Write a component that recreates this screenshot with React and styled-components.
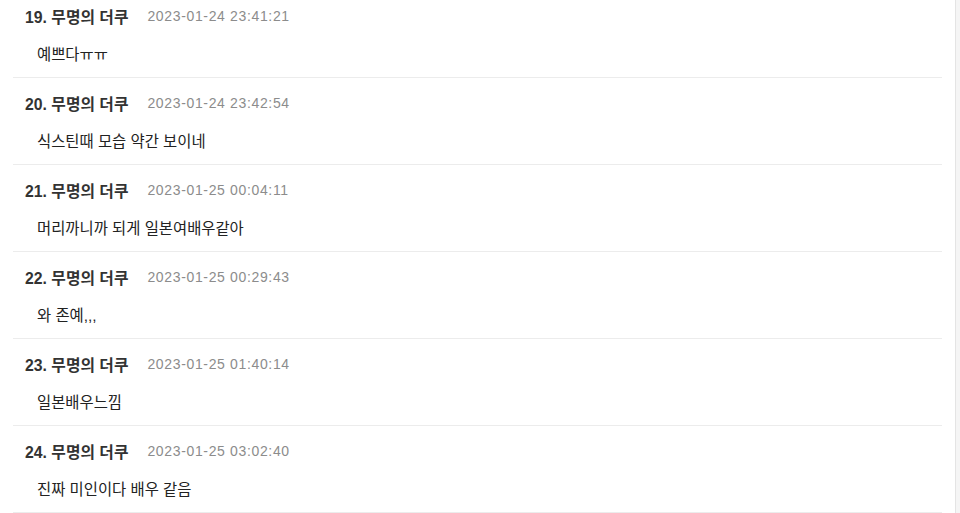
import styled, { createGlobalStyle } from "styled-components"

const GlobalStyle = createGlobalStyle`
  html, body {
    margin: 0;
    padding: 0;
    background: #ffffff;
    overflow: hidden;
  }
  body {
    font-family: "Liberation Sans", "Noto Sans CJK KR", sans-serif;
  }
`

const Page = styled.div`
  display: flex;
  width: 960px;
  height: 513px;
  overflow: hidden;
`

const Content = styled.div`
  flex: 1;
  min-width: 0;
`

const Track = styled.div`
  width: 4px;
  border-left: 1px solid #e4e4e4;
  background: #f5f5f5;
`

const List = styled.ul`
  list-style: none;
  margin: -9px 0 0 13px;
  padding: 0;
  width: 929px;
`

const Row = styled.li`
  padding: 16px 0 12px;
  border-bottom: 1px solid #ececec;
`

const Head = styled.div`
  display: flex;
  align-items: center;
  height: 18px;
  padding-left: 12px;
`

const Writer = styled.span`
  font-size: 15.8px;
  font-weight: 700;
  color: #333333;
  margin-right: 19px;
`

const Date = styled.span`
  font-size: 14px;
  letter-spacing: 0.65px;
  color: #8c8c8c;
`

const Body = styled.p`
  margin: 20px 0 0;
  padding-left: 24px;
  font-size: 15.4px;
  line-height: 20px;
  color: #222222;
`

const comments = [
  { no: 19, date: "2023-01-24 23:41:21", text: "예쁘다ㅠㅠ" },
  { no: 20, date: "2023-01-24 23:42:54", text: "식스틴때 모습 약간 보이네" },
  { no: 21, date: "2023-01-25 00:04:11", text: "머리까니까 되게 일본여배우같아" },
  { no: 22, date: "2023-01-25 00:29:43", text: "와 존예,,," },
  { no: 23, date: "2023-01-25 01:40:14", text: "일본배우느낌" },
  { no: 24, date: "2023-01-25 03:02:40", text: "진짜 미인이다 배우 같음" },
]

export default function App() {
  return (
    <>
      <GlobalStyle />
      <Page>
        <Content>
          <List>
            {comments.map((c) => (
              <Row key={c.no}>
                <Head>
                  <Writer>{c.no}. 무명의 더쿠</Writer>
                  <Date>{c.date}</Date>
                </Head>
                <Body>{c.text}</Body>
              </Row>
            ))}
          </List>
        </Content>
        <Track />
      </Page>
    </>
  )
}
